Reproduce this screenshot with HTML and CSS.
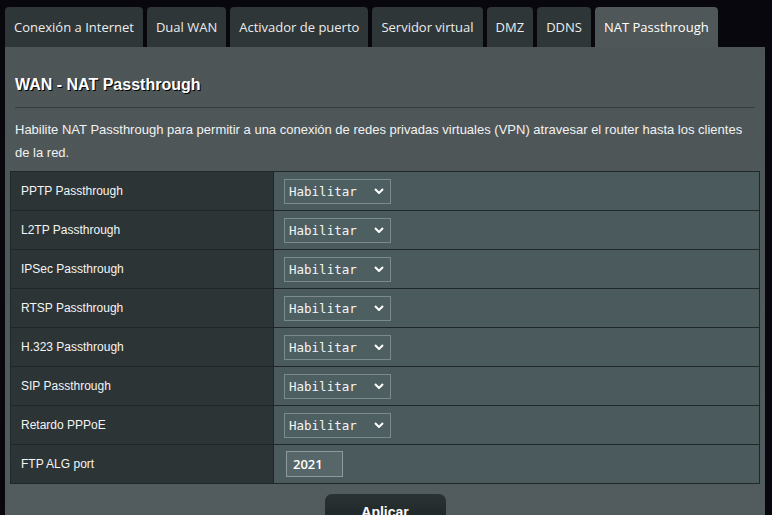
FILE: index.html
```html
<!DOCTYPE html>
<html lang="es">
<head>
<meta charset="utf-8">
<title>WAN - NAT Passthrough</title>
<link rel="stylesheet" href="styles.css">
</head>
<body>
<div class="page">
  <nav class="tabs">
    <div class="tab">Conexión a Internet</div>
    <div class="tab">Dual WAN</div>
    <div class="tab">Activador de puerto</div>
    <div class="tab">Servidor virtual</div>
    <div class="tab">DMZ</div>
    <div class="tab">DDNS</div>
    <div class="tab active">NAT Passthrough</div>
  </nav>
  <section class="panel">
    <h1 class="title">WAN - NAT Passthrough</h1>
    <div class="rule"></div>
    <p class="desc">Habilite NAT Passthrough para permitir a una conexión de redes privadas virtuales (VPN) atravesar el router hasta los clientes de la red.</p>
    <table class="settings">
      <tr><th>PPTP Passthrough</th><td><div class="select"><span>Habilitar</span><svg class="chev" viewBox="0 0 10 6" width="10" height="6"><path d="M1 1 L5 5 L9 1" /></svg></div></td></tr>
      <tr><th>L2TP Passthrough</th><td><div class="select"><span>Habilitar</span><svg class="chev" viewBox="0 0 10 6" width="10" height="6"><path d="M1 1 L5 5 L9 1" /></svg></div></td></tr>
      <tr><th>IPSec Passthrough</th><td><div class="select"><span>Habilitar</span><svg class="chev" viewBox="0 0 10 6" width="10" height="6"><path d="M1 1 L5 5 L9 1" /></svg></div></td></tr>
      <tr><th>RTSP Passthrough</th><td><div class="select"><span>Habilitar</span><svg class="chev" viewBox="0 0 10 6" width="10" height="6"><path d="M1 1 L5 5 L9 1" /></svg></div></td></tr>
      <tr><th>H.323 Passthrough</th><td><div class="select"><span>Habilitar</span><svg class="chev" viewBox="0 0 10 6" width="10" height="6"><path d="M1 1 L5 5 L9 1" /></svg></div></td></tr>
      <tr><th>SIP Passthrough</th><td><div class="select"><span>Habilitar</span><svg class="chev" viewBox="0 0 10 6" width="10" height="6"><path d="M1 1 L5 5 L9 1" /></svg></div></td></tr>
      <tr><th>Retardo PPPoE</th><td><div class="select"><span>Habilitar</span><svg class="chev" viewBox="0 0 10 6" width="10" height="6"><path d="M1 1 L5 5 L9 1" /></svg></div></td></tr>
      <tr><th>FTP ALG port</th><td><div class="input">2021</div></td></tr>
    </table>
    <div class="actions"><button class="apply">Aplicar</button></div>
  </section>
</div>
</body>
</html>
```
FILE: styles.css
```css
html, body {
  margin: 0;
  padding: 0;
  background: #08070d;
  height: 100%;
  overflow: hidden;
}
.page {
  padding: 7px 0 0 5px;
  font-family: "Liberation Sans", Arial, sans-serif;
  color: #fff;
}
.tabs {
  display: flex;
  gap: 4px;
}
.tab {
  height: 40px;
  padding: 0 9px 1px;
  display: flex;
  align-items: center;
  box-sizing: border-box;
  background: #2e3638;
  border-radius: 4px 4px 0 0;
  font-family: "Open Sans", "Noto Sans", sans-serif;
  font-size: 13px;
  color: #ececec;
  white-space: nowrap;
}
.tab.active {
  background: #4f5759;
  color: #fff;
}
.panel {
  width: 760px;
  height: 480px;
  box-sizing: border-box;
  background: linear-gradient(#4d5557, #525b5d);
  padding: 0 5px;
}
.title {
  margin: 0;
  padding: 28px 5px 0;
  font-size: 16px;
  line-height: 20px;
  font-weight: bold;
  text-shadow: 1px 1px 0 #000;
}
.rule {
  height: 1px;
  margin: 12px 5px 0;
  background: #333b3d;
}
.desc {
  margin: 10px 5px 7px;
  font-size: 13px;
  line-height: 23px;
  color: #f2f2f2;
}
.settings {
  width: 750px;
  border-collapse: collapse;
  border: 1px solid #1f2729;
}
.settings tr {
  height: 39px;
}
.settings th {
  width: 252px;
  padding: 0 0 0 10px;
  text-align: left;
  font-weight: normal;
  font-size: 12px;
  background: #2c3436;
  border-top: 1px solid #1f2729;
  color: #f4f4f4;
}
.settings td {
  padding: 0 0 0 10px;
  background: #4a5a5d;
  border-top: 1px solid #1f2729;
  border-left: 1px solid #1f2729;
}
.select {
  width: 107px;
  height: 25px;
  box-sizing: border-box;
  display: flex;
  align-items: center;
  justify-content: space-between;
  padding: 0 6px 0 4px;
  border: 1px solid #7b8a8c;
  background: #4e5f62;
  font-family: "DejaVu Sans Mono", "Liberation Mono", monospace;
  font-size: 12.5px;
  color: #f4f4f4;
}
.chev {
  fill: none;
  stroke: #fff;
  stroke-width: 2;
}
.input {
  width: 57px;
  height: 26px;
  margin-left: 2px;
  box-sizing: border-box;
  display: flex;
  align-items: center;
  padding-left: 6px;
  border: 1px solid #8d9b9c;
  background: #576769;
  font-family: "Open Sans", "Noto Sans", sans-serif;
  font-size: 13px;
  font-weight: 600;
  color: #fff;
}
.actions {
  display: flex;
  justify-content: center;
  padding-top: 10px;
}
.apply {
  width: 121px;
  height: 36px;
  border: none;
  border-radius: 7px;
  background: linear-gradient(#2a3234, #1b2224);
  color: #fff;
  font-family: "Liberation Sans", Arial, sans-serif;
  font-size: 14px;
  font-weight: bold;
  padding-top: 1px;
}
```
